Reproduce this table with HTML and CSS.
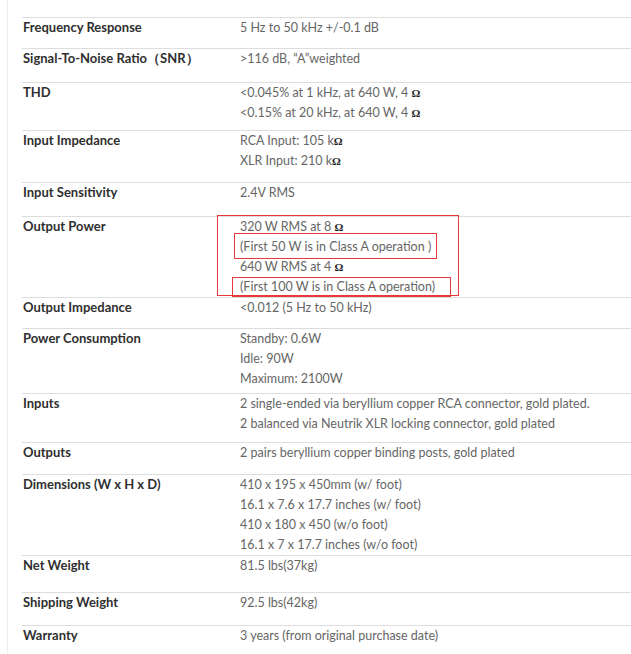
FILE: index.html
```html
<!DOCTYPE html>
<html>
<head>
<meta charset="utf-8">
<link rel="stylesheet" href="styles.css">
</head>
<body>
<div class="frame">
  <div class="specs">
    <div class="row pb10"><div class="label">Frequency Response</div><div class="value"><div>5 Hz to 50 kHz +/-0.1 dB</div></div></div>
    <div class="row pb13"><div class="label">Signal-To-Noise Ratio（SNR）</div><div class="value"><div>&gt;116 dB, “A”weighted</div></div></div>
    <div class="row pb7"><div class="label">THD</div><div class="value"><div>&lt;0.045% at 1 kHz, at 640 W, 4 <span class="ohm">Ω</span></div><div>&lt;0.15% at 20 kHz, at 640 W, 4 <span class="ohm">Ω</span></div></div></div>
    <div class="row pb11"><div class="label">Input Impedance</div><div class="value"><div>RCA Input: 105 k<span class="ohm">Ω</span></div><div>XLR Input: 210 k<span class="ohm">Ω</span></div></div></div>
    <div class="row pb13"><div class="label">Input Sensitivity</div><div class="value"><div>2.4V RMS</div></div></div>
    <div class="row pb0"><div class="label">Output Power</div><div class="value marked">
      <div>320 W RMS at 8 <span class="ohm">Ω</span></div>
      <div>(First 50 W is in Class A operation )</div>
      <div>640 W RMS at 4 <span class="ohm">Ω</span></div>
      <div>(First 100 W is in Class A operation)</div>
      <span class="mark mark-outer"></span>
      <span class="mark mark-a"></span>
      <span class="mark mark-b"></span>
    </div></div>
    <div class="row pb10"><div class="label">Output Impedance</div><div class="value"><div>&lt;0.012 (5 Hz to 50 kHz)</div></div></div>
    <div class="row pb4"><div class="label">Power Consumption</div><div class="value"><div>Standby: 0.6W</div><div>Idle: 90W</div><div>Maximum: 2100W</div></div></div>
    <div class="row pb8"><div class="label">Inputs</div><div class="value"><div>2 single-ended via beryllium copper RCA connector, gold plated.</div><div>2 balanced via Neutrik XLR locking connector, gold plated</div></div></div>
    <div class="row pb11"><div class="label">Outputs</div><div class="value"><div>2 pairs beryllium copper binding posts, gold plated</div></div></div>
    <div class="row pb0"><div class="label">Dimensions (W x H x D)</div><div class="value"><div>410 x 195 x 450mm (w/ foot)</div><div>16.1 x 7.6 x 17.7 inches (w/ foot)</div><div>410 x 180 x 450 (w/o foot)</div><div>16.1 x 7 x 17.7 inches (w/o foot)</div></div></div>
    <div class="row pb16"><div class="label">Net Weight</div><div class="value"><div>81.5 lbs(37kg)</div></div></div>
    <div class="row pb12"><div class="label">Shipping Weight</div><div class="value"><div>92.5 lbs(42kg)</div></div></div>
    <div class="row pb16"><div class="label">Warranty</div><div class="value"><div>3 years (from original purchase date)</div></div></div>
  </div>
</div>
</body>
</html>
```
FILE: styles.css
```css
html, body {
  margin: 0;
  padding: 0;
  background: #fff;
  overflow: hidden;
}
.frame {
  margin-left: 7px;
  border-left: 1px solid #eeeeee;
  padding: 17px 0 0 14px;
  min-height: 654px;
  box-sizing: border-box;
}
.specs {
  display: flex;
  flex-direction: column;
}
.row {
  display: grid;
  grid-template-columns: 218px 1fr;
  border-top: 1px solid #dddddd;
  line-height: 20px;
  font-size: 12.5px;
}
.label {
  padding-left: 1px;
  margin-top: -1px;
  font-family: Lato, "Noto Sans", sans-serif;
  font-weight: 700;
  font-size: 13px;
  color: #2f2f2f;
  white-space: nowrap;
}
.value {
  font-family: Lato, "Noto Sans", sans-serif;
  font-weight: 400;
  color: #666666;
  white-space: nowrap;
}
.ohm {
  font-family: "Liberation Serif", serif;
  font-weight: 700;
  font-size: 11px;
  color: #222;
}
.pb0 { padding-bottom: 0; }
.pb4 { padding-bottom: 4px; }
.pb7 { padding-bottom: 7px; }
.pb8 { padding-bottom: 8px; }
.pb10 { padding-bottom: 10px; }
.pb11 { padding-bottom: 11px; }
.pb12 { padding-bottom: 12px; }
.pb13 { padding-bottom: 13px; }
.pb16 { padding-bottom: 16px; }
.marked {
  position: relative;
}
.mark {
  position: absolute;
  border: 1.5px solid #e8383d;
  box-sizing: border-box;
}
.mark-outer {
  left: -23px;
  top: -2px;
  width: 242px;
  height: 81px;
}
.mark-a {
  left: -6px;
  top: 16px;
  width: 203px;
  height: 26px;
}
.mark-b {
  left: -8px;
  top: 60px;
  width: 219px;
  height: 20px;
}
```
